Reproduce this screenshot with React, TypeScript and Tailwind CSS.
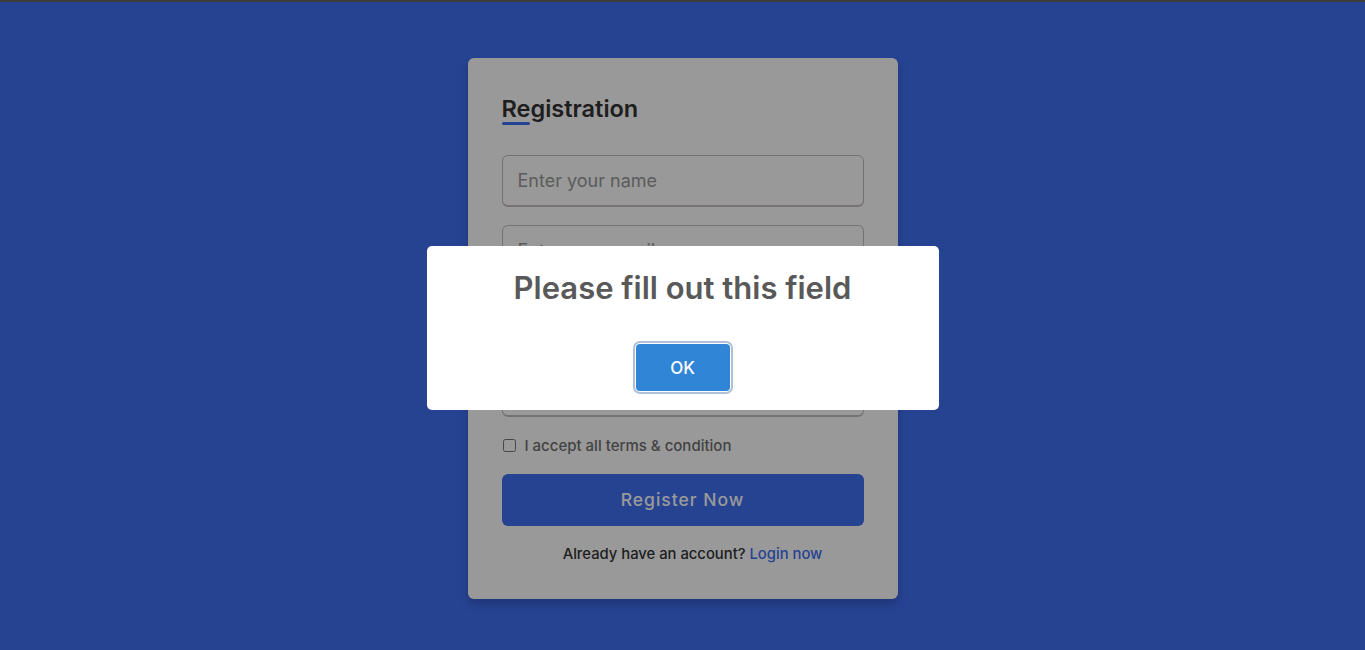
import { useState } from "react";

const fields = [
    { type: "text", placeholder: "Enter your name" },
    { type: "email", placeholder: "Enter your email" },
    { type: "password", placeholder: "Create password" },
    { type: "password", placeholder: "Confirm password" },
];

export default function App() {
    const [accepted, setAccepted] = useState(false);
    const [showAlert, setShowAlert] = useState(true);

    return (
        <div className="relative h-[650px] overflow-hidden bg-[#4070f4] font-['Inter',sans-serif]">
            <div className="h-[2px] bg-[#3b3b3b] relative z-20"></div>

            <div className="flex justify-center pt-[56px]">
                <div className="w-[430px] rounded-[6px] bg-white p-[34px] shadow-[0_5px_10px_rgba(0,0,0,0.2)]">
                    <h2 className="relative text-[23.5px] leading-[33px] font-semibold text-[#333] before:absolute before:left-0 before:bottom-0 before:h-[3px] before:w-[28px] before:rounded-xl before:bg-[#4070f4] before:content-['']">
                        Registration
                    </h2>

                    <form className="mt-[30px] flex flex-col gap-[18px]">
                        {fields.map((f) => (
                            <input
                                key={f.placeholder}
                                type={f.type}
                                placeholder={f.placeholder}
                                className="h-[52px] w-full rounded-[6px] border-[1.5px] border-b-[2.5px] border-[#c7bebe] px-[15px] text-[18px] text-[#333] outline-none placeholder:text-[#999]"
                            />
                        ))}

                        <label className="flex h-[21px] items-center">
                            <input
                                type="checkbox"
                                checked={accepted}
                                onChange={(e) => setAccepted(e.target.checked)}
                                className="ml-[1px] h-[13px] w-[13px]"
                            />
                            <span className="ml-[9px] text-[15px] leading-[21px] font-medium text-[#707070]">
                                I accept all terms &amp; condition
                            </span>
                        </label>

                        <button
                            type="button"
                            className="h-[52px] w-full rounded-[6px] bg-[#4070f4] text-[17.5px] font-medium tracking-[1px] text-white"
                        >
                            Register Now
                        </button>

                        <p className="pl-[20px] text-center text-[14.8px] leading-[21px] font-medium text-[#333]">
                            Already have an account? <a href="#" className="text-[#4070f4]">Login now</a>
                        </p>
                    </form>
                </div>
            </div>

            {showAlert && (
                <div className="absolute inset-0 z-10 flex items-start justify-center bg-black/40 pt-[246px]">
                    <div className="flex w-[512px] flex-col items-center rounded-[5px] bg-white pt-[24px] pb-[19px]">
                        <h2 className="text-[31px] leading-[36px] font-semibold text-[#595959]">
                            Please fill out this field
                        </h2>
                        <button
                            type="button"
                            onClick={() => setShowAlert(false)}
                            className="mt-[38px] h-[47px] w-[94px] rounded-[4px] bg-[#3085d6] pt-[3px] text-[17px] font-medium text-white ring-[2px] ring-[#aec1d8] ring-offset-1"
                        >
                            OK
                        </button>
                    </div>
                </div>
            )}
        </div>
    );
}
